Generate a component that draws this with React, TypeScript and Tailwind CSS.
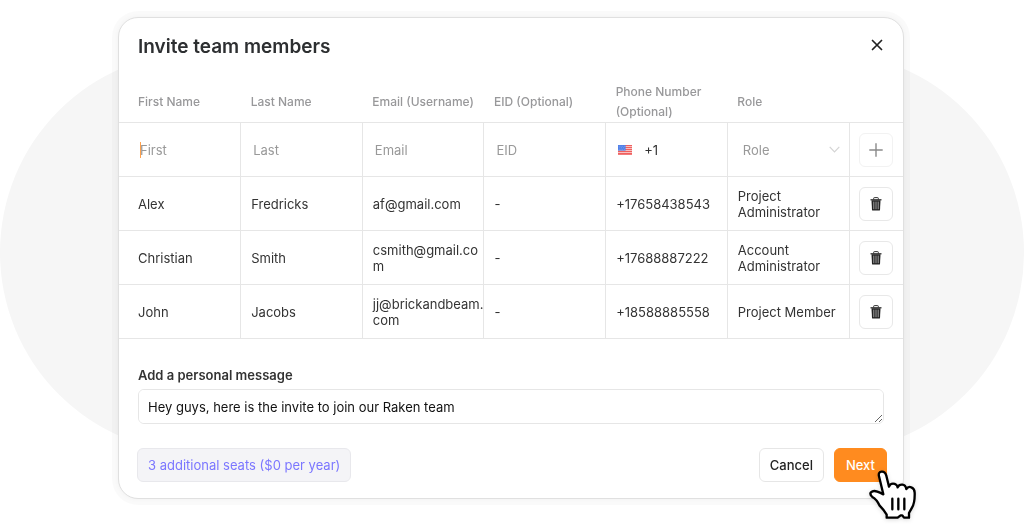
import React from "react";

type Member = {
  first: string;
  last: string;
  email: string;
  eid: string;
  phone: string;
  role: string;
};

const columns = [
  "First Name",
  "Last Name",
  "Email (Username)",
  "EID (Optional)",
  "Phone Number (Optional)",
  "Role",
];

const members: Member[] = [
  { first: "Alex", last: "Fredricks", email: "af@gmail.com", eid: "-", phone: "+17658438543", role: "Project Administrator" },
  { first: "Christian", last: "Smith", email: "csmith@gmail.com", eid: "-", phone: "+17688887222", role: "Account Administrator" },
  { first: "John", last: "Jacobs", email: "jj@brickandbeam.com", eid: "-", phone: "+18588885558", role: "Project Member" },
];

function CloseIcon() {
  return (
    <svg width="12" height="12" viewBox="0 0 12 12" fill="none" stroke="#222" strokeWidth="1.7" strokeLinecap="round" aria-hidden="true">
      <path d="M1.5 1.5l9 9M10.5 1.5l-9 9" />
    </svg>
  );
}

function PlusIcon() {
  return (
    <svg width="14" height="14" viewBox="0 0 14 14" fill="none" stroke="#8a8a8a" strokeWidth="1.4" aria-hidden="true">
      <path d="M7 0.3v13.4M0.3 7h13.4" />
    </svg>
  );
}

function TrashIcon() {
  return (
    <svg width="12" height="14" viewBox="0 0 12 14" fill="none" aria-hidden="true">
      <path d="M3.7 2.4V1.2Q3.7.6 4.3.6h3.4Q8.3.6 8.3 1.2v1.2" stroke="#333" strokeWidth="1" />
      <path d="M.5 2.8h11" stroke="#222" strokeWidth="1.2" />
      <path d="M1.5 3.2h9l-.5 9.7q-.1.7-.8.7H2.8q-.7 0-.8-.7z" fill="#222" />
      <path d="M3.8 4.6v7.6M6 4.6v7.6M8.2 4.6v7.6" stroke="#b0b0b0" strokeWidth=".9" />
    </svg>
  );
}

function FlagIcon() {
  return (
    <svg width="14" height="10" viewBox="0 0 14 10" aria-hidden="true" className="shrink-0">
      <path fill="#f7c0c0" d="M0 0h14v10H0z" />
      <path stroke="#f0605f" strokeWidth="1" d="M0 .5h14M0 2.5h14M0 4.5h14M0 6.5h14M0 8.5h14M0 9.8h14" />
      <path fill="#4f7fe8" d="M0 0h7.6v5.6H0z" />
      <path stroke="#a9c3fa" strokeWidth=".6" strokeDasharray=".7 1.1" d="M.8 1.3h6.4M1.5 2.8h5.6M.8 4.3h6.4" />
    </svg>
  );
}

function HandCursor() {
  return (
    <svg width="64" height="64" viewBox="0 0 192 192" aria-hidden="true" className="drop-shadow-sm">
      <path
        d="M70 103L57 49Q54 36 65 35Q75 34 79 47L87 80Q90 71 99 71Q110 71 113 82Q117 73 127 74Q137 75 139 87Q145 78 154 82Q164 86 164 98Q165 128 156 143L147 159V173H132L127 166H122L113 173H80V164Q72 150 59 137Q50 118 37 111Q28 103 33 97Q40 90 52 95Q62 99 70 103Z"
        fill="#fff"
        stroke="#000"
        strokeWidth="7"
        strokeLinejoin="round"
      />
      <path d="M97 116v32M115 116v32M133 116v32" stroke="#000" strokeWidth="7" strokeLinecap="round" />
    </svg>
  );
}

function Field({ label }: { label: string }) {
  return (
    <input
      type="text"
      aria-label={label}
      placeholder={label}
      className="block w-full bg-transparent pl-3 text-[13px] leading-5 caret-[#ff8b1f] outline-none placeholder:text-[#999]"
    />
  );
}

export default function App() {
  return (
    <main className="grid min-h-screen grid-cols-1 items-start overflow-hidden bg-white font-['Inter','Liberation_Sans',sans-serif] text-[13px] text-[#333]">
      <div className="col-start-1 row-start-1 mt-[52px] h-[401px] rounded-full bg-[#f6f6f6]" />

      <section
        role="dialog"
        aria-labelledby="dialog-title"
        className="relative col-start-1 row-start-1 mt-[17px] mr-[120px] ml-[118px] rounded-[20px] border border-[#e0e0e0] bg-white shadow-[0_0_0_6px_rgba(0,0,0,0.02),0_0_5px_rgba(0,0,0,0.04)]"
      >
        <header className="flex items-center justify-between pt-[13px] pr-3 pl-[19px]">
          <h1 id="dialog-title" className="text-[19px] leading-8 font-semibold text-[#2d2f31]">Invite team members</h1>
          <button type="button" aria-label="Close" className="-mt-1 grid size-7 place-items-center">
            <CloseIcon />
          </button>
        </header>

        <table className="mt-[19px] w-full table-fixed border-collapse">
          <colgroup>
            {columns.map((c) => (
              <col key={c} />
            ))}
            <col className="w-[54px]" />
          </colgroup>
          <thead>
            <tr className="h-10 border-b border-[#e6e6e6]">
              {columns.map((c, i) => (
                <th key={c} scope="col" className={`p-0 text-left text-[12px] leading-5 font-medium text-[#98989a] ${i === 0 ? "pl-[19px]" : "pl-[10px]"}`}>
                  {c}
                </th>
              ))}
              <td />
            </tr>
          </thead>
          <tbody>
            <tr className="h-[54px] border-b border-[#e6e6e6]">
              <td className="border-r border-[#e6e6e6] p-0 pl-[9px]">
                <div className="relative">
                  <Field label="First" />
                  <span className="absolute top-0.5 left-3 h-4 w-px bg-[#ffa14d]" />
                </div>
              </td>
              <td className="border-r border-[#e6e6e6] p-0"><Field label="Last" /></td>
              <td className="border-r border-[#e6e6e6] p-0"><Field label="Email" /></td>
              <td className="border-r border-[#e6e6e6] p-0"><Field label="EID" /></td>
              <td className="border-r border-[#e6e6e6] p-0">
                <div className="flex items-center pl-3">
                  <FlagIcon />
                  <input type="tel" aria-label="Phone number" defaultValue="+1" className="ml-3 w-full min-w-0 bg-transparent text-[13px] leading-5 outline-none" />
                </div>
              </td>
              <td className="border-r border-[#e6e6e6] p-0">
                <div className="flex items-center pr-[9px] pl-[15px]">
                  <select aria-label="Role" className="w-full min-w-0 appearance-none bg-transparent text-[13px] leading-5 text-[#999] outline-none">
                    <option>Role</option>
                  </select>
                  <svg width="11" height="7" viewBox="0 0 11 7" fill="none" stroke="#d4d4d4" strokeWidth="1.2" aria-hidden="true" className="shrink-0">
                    <path d="M.7.8l4.8 5 4.8-5" />
                  </svg>
                </div>
              </td>
              <td className="p-0">
                <button type="button" aria-label="Add member" className="mx-auto grid size-[34px] place-items-center rounded-md border border-[#f2f2f2] bg-white">
                  <PlusIcon />
                </button>
              </td>
            </tr>
            {members.map((m) => (
              <tr key={m.phone} className="h-[54px] border-b border-[#e6e6e6]">
                {[m.first, m.last, m.email, m.eid, m.phone, m.role].map((value, i) => (
                  <td key={i} className={`border-r border-[#e6e6e6] p-0 leading-4 break-words ${i === 0 ? "pl-[19px]" : "pl-[10px]"}`}>
                    {value}
                  </td>
                ))}
                <td className="p-0">
                  <button type="button" aria-label={`Remove ${m.first} ${m.last}`} className="mx-auto grid size-[34px] place-items-center rounded-md border border-[#e8e8e8] bg-white">
                    <TrashIcon />
                  </button>
                </td>
              </tr>
            ))}
          </tbody>
        </table>

        <div className="px-[19px] pt-[26px]">
          <label htmlFor="message" className="block leading-5 font-semibold">Add a personal message</label>
          <textarea
            id="message"
            rows={1}
            defaultValue="Hey guys, here is the invite to join our Raken team"
            className="mt-1 block h-[35px] w-full rounded-md border border-[#e6e6e6] bg-white px-[9px] py-[7px] text-[13px] leading-5 text-[#111] outline-none"
          />
        </div>

        <footer className="flex items-center px-4 pt-6 pb-4 leading-5">
          <p className="ml-[2px] rounded-md border border-[#e8e8ec] bg-[#f4f4f7] px-[10px] py-[6px] text-[#7b76ff]">
            3 additional seats ($0 per year)
          </p>
          <button type="button" className="ml-auto rounded-md border border-[#e6e6e6] bg-white px-[10px] py-[6px] font-medium text-[#222]">
            Cancel
          </button>
          <div className="relative ml-[10px]">
            <button type="button" className="block rounded-md border border-[#ff8b1f] bg-[#ff8b1f] px-[11px] py-[6px] font-medium text-white">
              Next
            </button>
            <span className="pointer-events-none absolute top-[12px] left-[26px]">
              <HandCursor />
            </span>
          </div>
        </footer>
      </section>
    </main>
  );
}
